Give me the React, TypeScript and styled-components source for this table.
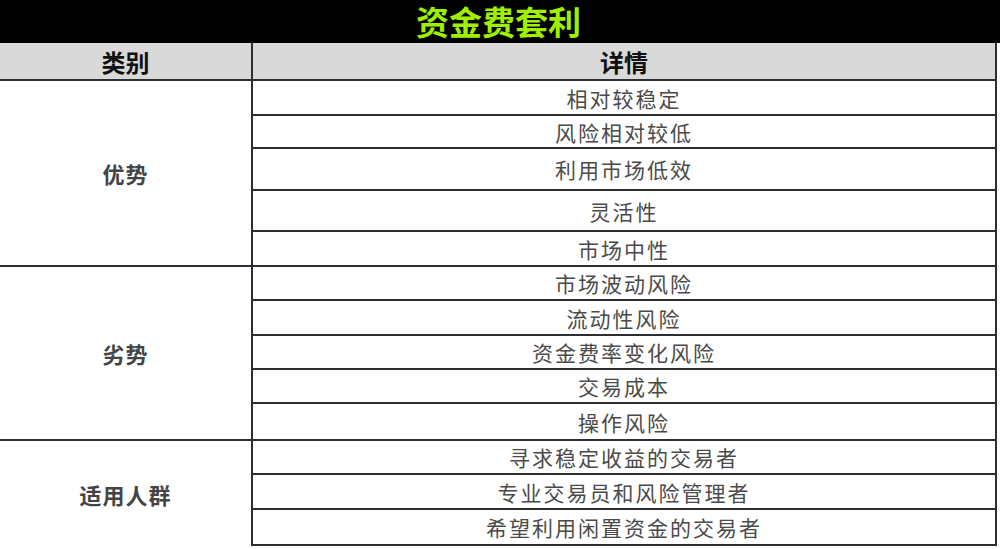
import styled, { createGlobalStyle } from "styled-components";

interface Group {
  category: string;
  rows: { text: string; h: number }[];
}

const groups: Group[] = [
  {
    category: "优势",
    rows: [
      { text: "相对较稳定", h: 35 },
      { text: "风险相对较低", h: 33 },
      { text: "利用市场低效", h: 42 },
      { text: "灵活性", h: 41 },
      { text: "市场中性", h: 35 },
    ],
  },
  {
    category: "劣势",
    rows: [
      { text: "市场波动风险", h: 34 },
      { text: "流动性风险", h: 35 },
      { text: "资金费率变化风险", h: 34 },
      { text: "交易成本", h: 34 },
      { text: "操作风险", h: 37 },
    ],
  },
  {
    category: "适用人群",
    rows: [
      { text: "寻求稳定收益的交易者", h: 34 },
      { text: "专业交易员和风险管理者", h: 35 },
      { text: "希望利用闲置资金的交易者", h: 36 },
    ],
  },
];

const App = () => {
  return (
    <>
      <GlobalStyle />
      <Page>
        <TitleBar>
          <TitleText>资金费套利</TitleText>
        </TitleBar>
        <Table>
          <HeaderRow>
            <HeaderCell>类别</HeaderCell>
            <HeaderCell>详情</HeaderCell>
          </HeaderRow>
          {groups.map((g) => (
            <GroupRow key={g.category}>
              <CategoryCell>{g.category}</CategoryCell>
              <DetailList>
                {g.rows.map((r) => (
                  <DetailCell key={r.text} $h={r.h}>
                    {r.text}
                  </DetailCell>
                ))}
              </DetailList>
            </GroupRow>
          ))}
        </Table>
      </Page>
    </>
  );
};

const GlobalStyle = createGlobalStyle`
  html, body {
    margin: 0;
    padding: 0;
    background: #fff;
  }
  * {
    box-sizing: border-box;
  }
`;

const Page = styled.div`
  width: 1000px;
  height: 549px;
  overflow: hidden;
  background: #fff;
  font-family: "Noto Sans CJK SC", "Noto Sans", sans-serif;
`;

const TitleBar = styled.div`
  height: 43px;
  width: 1000px;
  background: #000;
  display: flex;
  align-items: center;
  justify-content: center;
  padding-right: 3px;
`;

const TitleText = styled.h1`
  margin: 0;
  color: #9ef000;
  font-size: 33px;
  font-weight: 700;
  line-height: 43px;
  white-space: nowrap;
`;

const Table = styled.div`
  width: 997px;
  display: flex;
  flex-direction: column;
`;

const HeaderRow = styled.div`
  display: grid;
  grid-template-columns: 253px 744px;
  height: 38px;
  background: #d9d9d9;
  border-bottom: 2px solid #2b2e33;
`;

const HeaderCell = styled.div`
  display: flex;
  align-items: center;
  justify-content: center;
  font-size: 24px;
  font-weight: 700;
  color: #111;
  border-right: 2px solid #2b2e33;
  padding-top: 1px;
`;

const GroupRow = styled.div`
  display: grid;
  grid-template-columns: 253px 744px;
  border-bottom: 2px solid #2b2e33;

  &:last-child {
    border-bottom: none;
  }
`;

const CategoryCell = styled.div`
  display: flex;
  align-items: center;
  justify-content: center;
  font-size: 22px;
  font-weight: 700;
  color: #444;
  border-right: 2px solid #2b2e33;
  letter-spacing: 1px;
`;

const DetailList = styled.div`
  display: flex;
  flex-direction: column;
  border-right: 2px solid #2b2e33;
`;

const DetailCell = styled.div<{ $h: number }>`
  height: ${(p) => p.$h}px;
  display: flex;
  align-items: center;
  justify-content: center;
  font-size: 21px;
  letter-spacing: 2px;
  color: #4a4a4a;
  border-bottom: 2px solid #2b2e33;

  ${GroupRow}:not(:last-child) &:last-child {
    border-bottom: none;
    height: ${(p) => p.$h - 2}px;
  }
`;

export default App;
